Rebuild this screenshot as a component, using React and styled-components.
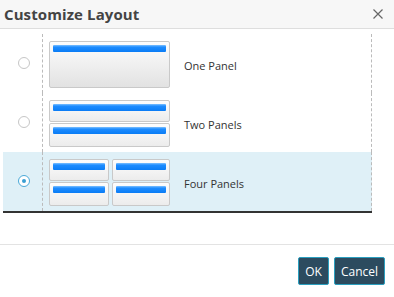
import React, { useState } from "react";
import styled, { createGlobalStyle } from "styled-components";

const Global = createGlobalStyle`
  html, body { margin: 0; padding: 0; background: #fff; }
  body { font-family: "Open Sans", "Liberation Sans", sans-serif; }
`;

const Dialog = styled.div`
  width: 394px;
  height: 297px;
  background: #fff;
  display: flex;
  flex-direction: column;
  overflow: hidden;
`;

const Header = styled.div`
  height: 28px;
  background: #f7f7f7;
  border-bottom: 1px solid #dedede;
  display: flex;
  align-items: center;
  justify-content: space-between;
  padding: 0 11px 0 4px;
  box-sizing: content-box;
`;

const Title = styled.h1`
  margin: 0;
  font-size: 15px;
  font-weight: 700;
  color: #444;
  letter-spacing: 0.1px;
  line-height: 20px;
`;

const Close = styled.button`
  border: 0;
  background: none;
  padding: 0;
  width: 10px;
  height: 10px;
  display: flex;
  cursor: pointer;
`;

const Table = styled.div`
  margin: 0 22px 0 3px;
  padding-top: 5px;
  border-bottom: 2px solid #333;
`;

const Row = styled.label`
  display: grid;
  grid-template-columns: 39px 1fr;
  height: 59px;
  background: ${(p) => (p.$selected ? "#dff0f7" : "transparent")};
  cursor: pointer;
`;

const RadioCell = styled.div`
  display: flex;
  align-items: center;
  justify-content: center;
  padding: 0 0 1px 3px;
`;

const Radio = styled.span`
  width: 12px;
  height: 12px;
  border-radius: 50%;
  box-sizing: border-box;
  border: 1px solid ${(p) => (p.$checked ? "#4aa9d8" : "#c6c6c6")};
  background: #fff;
  display: flex;
  align-items: center;
  justify-content: center;
  &::after {
    content: "";
    width: 4px;
    height: 4px;
    border-radius: 50%;
    background: ${(p) => (p.$checked ? "#3a9fd2" : "transparent")};
  }
`;

const ContentCell = styled.div`
  border-left: 1px dashed #bbb;
  border-right: 1px dashed #bbb;
  display: flex;
  align-items: flex-start;
  padding: 7px 0 0 6px;
  gap: 14px;
`;

const Thumb = styled.div`
  width: 121px;
  height: 47px;
  display: grid;
  gap: 1px 3px;
  grid-template-columns: ${(p) => (p.$cols === 2 ? "60px 1fr" : "1fr")};
  grid-template-rows: ${(p) => (p.$rows === 2 ? "22px 1fr" : "1fr")};
`;

const Pane = styled.div`
  box-sizing: border-box;
  border: 1px solid #c9c9c9;
  border-radius: 2px;
  background: linear-gradient(#fdfdfd, ${(p) => (p.$tall ? "#e2e2e2" : "#ececec")});
  padding: 3px 3px 0;
`;

const Bar = styled.div`
  height: 7px;
  border-radius: 1px;
  background: linear-gradient(#7cc0ff 0%, #1d8cff 30%, #0a7cf5 100%);
`;

const Label = styled.span`
  font-size: 11px;
  color: #333;
  line-height: 16px;
  margin-top: 17px;
`;

const Footer = styled.div`
  margin-top: 31px;
  border-top: 1px solid #e3e3e3;
  display: flex;
  justify-content: flex-end;
  gap: 5px;
  padding: 12px 9px 0 0;
`;

const Button = styled.button`
  height: 28px;
  box-sizing: border-box;
  border: 1px solid #2a9fbf;
  border-radius: 2px;
  background: #2c4b5f;
  color: #fff;
  font-family: "Open Sans", "Liberation Sans", sans-serif;
  font-size: 12px;
  padding: 0 ${(p) => (p.$wide ? "5px" : "6px")};
  min-width: ${(p) => (p.$wide ? "51px" : "31px")};
  cursor: pointer;
`;

const layouts = [
  { id: "one", label: "One Panel", cols: 1, rows: 1 },
  { id: "two", label: "Two Panels", cols: 1, rows: 2 },
  { id: "four", label: "Four Panels", cols: 2, rows: 2 },
];

export default function App() {
  const [sel, setSel] = useState("four");
  return (
    <Dialog>
      <Global />
      <Header>
        <Title>Customize Layout</Title>
        <Close aria-label="Close">
          <svg width="10" height="10" viewBox="0 0 10 10">
            <path d="M0.5 0.5L9.5 9.5M9.5 0.5L0.5 9.5" stroke="#666" strokeWidth="1.2" />
          </svg>
        </Close>
      </Header>
      <Table>
        {layouts.map((l) => (
          <Row key={l.id} $selected={sel === l.id} onClick={() => setSel(l.id)}>
            <RadioCell>
              <Radio $checked={sel === l.id} />
            </RadioCell>
            <ContentCell>
              <Thumb $cols={l.cols} $rows={l.rows}>
                {Array.from({ length: l.cols * l.rows }).map((_, i) => (
                  <Pane key={i} $tall={l.rows === 1}>
                    <Bar />
                  </Pane>
                ))}
              </Thumb>
              <Label>{l.label}</Label>
            </ContentCell>
          </Row>
        ))}
      </Table>
      <Footer>
        <Button>OK</Button>
        <Button $wide>Cancel</Button>
      </Footer>
    </Dialog>
  );
}
